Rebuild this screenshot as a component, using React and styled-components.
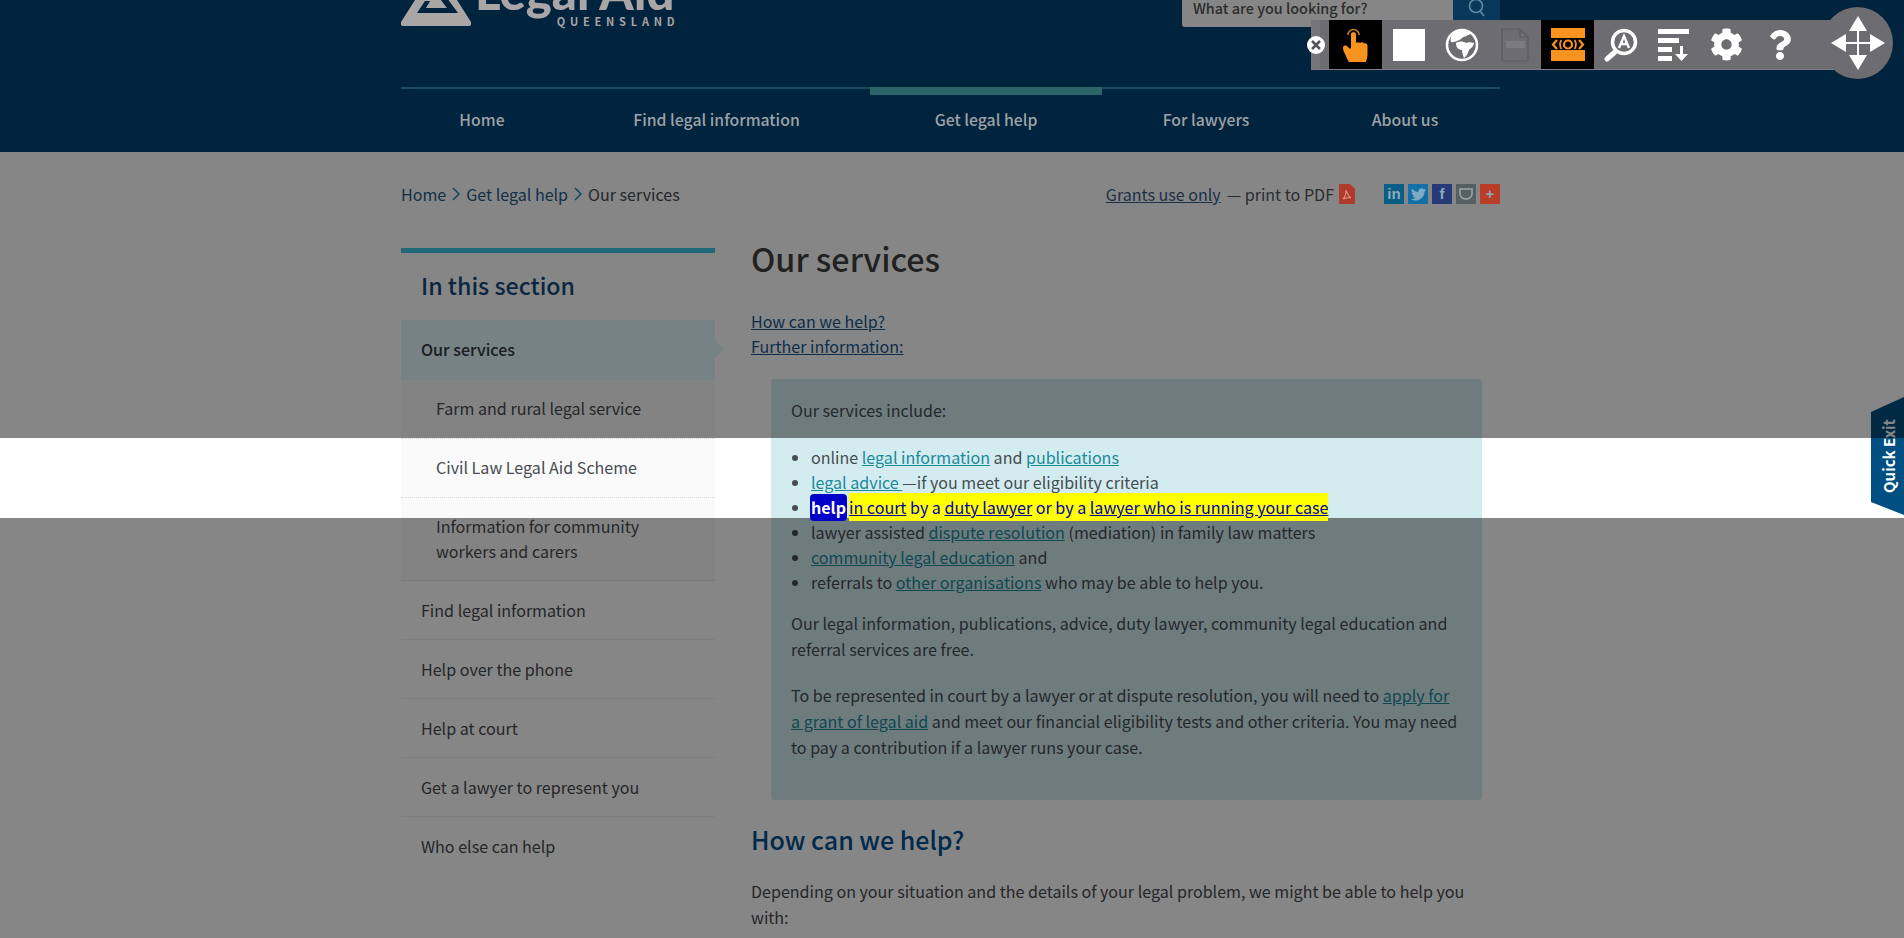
import React from 'react';
import styled, { createGlobalStyle } from 'styled-components';
import { FaCog, FaQuestion } from 'react-icons/fa';

const SANS = '"Noto Sans CJK SC", "Source Sans Pro", "Open Sans", sans-serif';
const BODY = '16.07px';

const Global = createGlobalStyle`
  html, body { margin: 0; padding: 0; background: #fff; }
  body { font-family: ${SANS}; color: #474b4f; overflow: hidden; }
  * { box-sizing: border-box; }
`;

const Page = styled.div`position: relative; width: 1904px; height: 938px; overflow: hidden; background: #fff;`;
const Header = styled.header`height: 152px; background: #00233e;`;
const Wrap = styled.div`width: 1099px; margin-left: 401px;`;
const HeaderTop = styled.div`display: flex; justify-content: space-between; height: 87px; overflow: hidden;`;
const Logo = styled.div`display: flex; gap: 4px; height: 27px;`;
const LogoWords = styled.div`display: flex; flex-direction: column; align-items: flex-end; margin-top: -34px;`;
const LogoName = styled.div`font-family: "Lato", sans-serif; font-weight: 900; font-size: 49px; line-height: 50px; color: #aaa6a6; white-space: nowrap;`;
const LogoState = styled.div`font-weight: 700; font-size: 11px; line-height: 11px; letter-spacing: 4.8px; margin-right: -5px; color: #a5a5a5; white-space: nowrap;`;
const Search = styled.div`display: flex; height: 27px;`;
const SearchInput = styled.div`width: 271px; height: 27px; background: #868686; border-radius: 0 0 3px 3px; padding-left: 11px; font-size: 14.4px; line-height: 15px; font-weight: 500; color: #2c2c2c;`;
const SearchButton = styled.div`width: 47px; height: 23px; background: #08395c; display: flex; justify-content: center; color: #5f89a5;`;
const Nav = styled.nav`display: flex; height: 65px; border-top: 2px solid #1c4a5f;`;
const NavItem = styled.a`
  width: ${p => p.$w}px; height: 65px; margin-top: -2px; padding-top: ${p => (p.$active ? 12 : 20)}px;
  border-top: ${p => (p.$active ? '8px solid #2c6468' : '0')};
  text-align: center; font-size: 15.8px; line-height: 26px; font-weight: 500; color: #9ea2a6;
`;

const Crumbs = styled.div`display: flex; justify-content: space-between; height: 96px; padding-top: 30px; font-size: ${BODY}; line-height: 26px;`;
const CrumbTrail = styled.div`display: flex; align-items: center; height: 24px; gap: 5px;`;
const CrumbLink = styled.a`color: #1f5c8a;`;
const CrumbChevron = styled.svg`width: 10px; height: 16px; fill: none; stroke: #2a8ab0; stroke-width: 1.6;`;
const Tools = styled.div`position: relative; z-index: 3; display: flex; align-items: center; height: 24px; color: #2a2d30;`;
const ToolsLink = styled.a`color: #1c3148; text-decoration: underline; margin-right: 6px;`;
const PdfIcon = styled.svg`width: 16px; height: 20px; margin-left: 5px; margin-right: 29px;`;
const Socials = styled.div`display: flex; gap: 4px;`;
const Social = styled.div`
  width: 20px; height: 20px; background: ${p => p.$bg}; color: #8fa9b8;
  display: flex; align-items: center; justify-content: center;
  font-family: "Liberation Sans", sans-serif; font-weight: 700; font-size: 15px; line-height: 20px;
`;

const Columns = styled.div`display: grid; grid-template-columns: 314px 1fr; column-gap: 36px;`;
const Side = styled.aside`border-top: 5px solid #40c8e4; position: relative;`;
const SideTitle = styled.h2`margin: 0; height: 67px; padding: 18px 0 0 20px; font-size: 23.2px; line-height: 28px; font-weight: 500; color: #144a78;`;
const SideActive = styled.a`
  position: relative; display: block; height: 60px; padding-left: 20px;
  font-size: ${BODY}; line-height: 58px; font-weight: 500; color: #33383b; background: #e0f8fc;
  &::after {
    content: ""; position: absolute; left: 100%; top: 20px;
    border-left: 9px solid #e0f8fc; border-top: 9px solid transparent; border-bottom: 9px solid transparent;
  }
`;
const SubItem = styled.a`
  display: block; padding: 16px 20px ${p => (p.$tall ? 16 : 17)}px 35px; font-size: ${BODY}; line-height: 25px;
  background: #fafafa; border-bottom: 1px dotted #d8d8d8; color: #474b4f;
`;
const TopItem = styled.a`
  display: block; height: 59px; padding: 17px 0 0 20px; font-size: ${BODY}; line-height: 25px;
  border-bottom: 1px solid #efefef; color: #474b4f;
  &:last-child { border-bottom: 0; }
`;

const Main = styled.main`min-width: 0; font-size: ${BODY}; line-height: 26px;`;
const Title = styled.h1`margin: -2px 0 39px; font-size: 32.3px; line-height: 24px; font-weight: 500; color: #3f3f3f;`;
const JumpLinks = styled.div`display: flex; flex-direction: column; align-items: flex-start; line-height: 25px;`;
const JumpLink = styled.a`color: #18598f; text-decoration: underline;`;
const Panel = styled.section`margin: 20px 18px 0 20px; padding: 18px 22px 20px 20px; background: #d3ecf0; border-radius: 3px;`;
const PanelText = styled.p`margin: 0 0 20px; color: #474d50;`;
const List = styled.ul`margin: 22px 0 15px; padding: 0 0 0 20px; line-height: 25px; color: #474d50;`;
const TealLink = styled.a`color: #1b8a9b; text-decoration: underline;`;
const Mark = styled.span`position: relative; z-index: 3; background: #ffff00; color: #0000a8; padding: 2px 0;`;
const MarkLink = styled.span`text-decoration: underline;`;
const HelpWord = styled.span`position: relative; z-index: 3; display: inline-block; height: 27px; margin: -1px 2px -1px -1px; padding: 0 1px; background: #0000c8; color: #fff; border-radius: 4px; font-weight: 700; line-height: 26px;`;
const Subhead = styled.h2`margin: 21px 0 21px; font-size: 25px; line-height: 36px; font-weight: 500; color: #00508f;`;
const BodyText = styled.p`margin: 0; color: #474b4f;`;

const Mask = styled.div`position: absolute; left: 0; right: 0; z-index: 2; top: ${p => p.$top}px; height: ${p => p.$h}px; background: rgba(0, 0, 0, 0.475);`;

const QuickExit = styled.a`
  position: absolute; z-index: 1; left: 1871px; top: 397px; width: 33px; height: 118px;
  background: #004f82; clip-path: polygon(0 15px, 100% 0, 100% 100%, 0 105px);
  display: flex; align-items: center; justify-content: center;
`;
const QuickExitLabel = styled.span`
  display: block; transform: rotate(-90deg); white-space: nowrap;
  font-size: 15px; line-height: 20px; font-weight: 700; color: #fff; margin-left: 3px;
`;

const Toolbar = styled.div`
  position: absolute; z-index: 4; left: 1311px; top: 20px; width: 530px; height: 50px; padding-left: 9px;
  display: grid; grid-template-columns: repeat(9, 53px); align-items: stretch;
  background: #6c6c71; border-bottom: 1px solid #7c8088; border-left: 9px solid #76767a;
`;
const Slot = styled.div`
  display: flex; align-items: center; justify-content: center; height: 49px;
  background: ${p => (p.$on ? '#000' : 'transparent')};
  color: #fff;
`;
const WhiteSquare = styled.div`width: 32px; height: 32px; background: #fff;`;
const CloseButton = styled.div`
  position: absolute; z-index: 5; left: 1307px; top: 36px; width: 18px; height: 18px; border-radius: 50%;
  background: #fff; display: flex; align-items: center; justify-content: center;
`;
const MoveHandle = styled.div`
  position: absolute; z-index: 5; left: 1822px; top: 7px; width: 71px; height: 72px; border-radius: 50%;
  background: #6c6c71; display: flex; align-items: center; justify-content: center;
`;

const Chevron = () => (
  <CrumbChevron viewBox="0 0 10 16"><path d="M2 2 l6 6 -6 6" /></CrumbChevron>
);

const HandIcon = () => (
  <svg width="26" height="38" viewBox="0 0 26 38">
    <path d="M5 9a5.500 5.500 0 0 1 11 0" fill="none" stroke="#c9771a" strokeWidth="1.500" />
    <path fill="#f7931e" d="M8 8c0-2.500 5-2.500 5 0v9c1-1 3-1 4 0 1-1 3-1 4 .5 1-.5 3.500 0 3.500 2v9c0 3-1 5-1.500 7.500H6C4 33 3 30 1.500 27 0 24 0 23 0 21.500 .5 19 3 19 4.500 20.500L6 22c1 1 2 .5 2-.5z" />
  </svg>
);

const GlobeIcon = () => (
  <svg width="34" height="34" viewBox="0 0 34 34">
    <circle cx="17" cy="17" r="15" fill="none" stroke="#fff" strokeWidth="2.600" />
    <path fill="#fff" d="M10 4c4-2 10-2 15 0 2 1.500-1 3-2 3-2 2-4 1-6 3-2 2-8 5-11 4-1-3 0-7 4-10z" />
    <path fill="#fff" d="M11 15c3-2 7-2 10 0 2-1 5-1 8 0 0 3-3 5-5 7-1 3-2 6-5 8-1-2-2-6-2-8-3 0-6-2-6-7z" />
  </svg>
);

const DocIcon = () => (
  <svg width="30" height="34" viewBox="0 0 30 34" fill="none" stroke="#606064" strokeWidth="1.600">
    <path d="M2 1h18l8 8v23a1 1 0 0 1-1 1H3a1 1 0 0 1-1-1z" />
    <path d="M20 1v8h8" />
    <path d="M6 13h19v7H6z" fill="#7c7c80" stroke="none" />
  </svg>
);

const EyeIcon = () => (
  <svg width="34" height="33" viewBox="0 0 34 33">
    <rect x="0" y="0" width="34" height="10" fill="#f7931e" />
    <rect x="0" y="22" width="34" height="11" fill="#f7931e" />
    <path d="M6 12l-4 4.500 4 4.500M28 12l4 4.500-4 4.500" fill="none" stroke="#f7931e" strokeWidth="2.200" />
    <path d="M10.500 12c-2 3-2 6 0 9M23.500 12c2 3 2 6 0 9" fill="none" stroke="#f7931e" strokeWidth="1.800" />
    <circle cx="17" cy="16.500" r="4" fill="none" stroke="#f7931e" strokeWidth="2.200" />
  </svg>
);

const ZoomIcon = () => (
  <svg width="34" height="34" viewBox="0 0 34 34">
    <circle cx="20" cy="14" r="11.500" fill="none" stroke="#fff" strokeWidth="3.500" />
    <path d="M11 24L3 31" stroke="#fff" strokeWidth="5" strokeLinecap="round" />
    <path d="M15 20l5-12 5 12M17 16h6" fill="none" stroke="#fff" strokeWidth="2.400" />
  </svg>
);

const SortIcon = () => (
  <svg width="32" height="32" viewBox="0 0 32 32" fill="#fff">
    <rect x="0" y="0" width="31" height="5" />
    <rect x="0" y="9" width="21" height="5" />
    <rect x="0" y="18" width="14" height="5" />
    <rect x="0" y="27" width="14" height="5" />
    <path d="M22 17h3v8h5l-6.500 7-6.500-7h5z" />
  </svg>
);

const MoveIcon = () => (
  <svg width="54" height="54" viewBox="0 0 54 54" fill="#fff">
    <path d="M26 8h2v38h-2z" />
    <path d="M8 26h38v2H8z" />
    <path d="M27 0l9 15H18z" />
    <path d="M27 54l-9-15h18z" />
    <path d="M0 27l15-9v18z" />
    <path d="M54 27l-15 9V18z" />
  </svg>
);

const SearchIcon = () => (
  <svg width="18" height="20" viewBox="0 0 18 20" fill="none" stroke="currentColor" strokeWidth="1.600">
    <circle cx="8" cy="6" r="6.500" />
    <path d="M12 11l4 5" />
  </svg>
);

const LogoMark = () => (
  <svg width="70" height="27" viewBox="0 0 70 27">
    <path fill="#aaa6a6" d="M14 0h42l14 22c1 2 0 4-2 4H2c-2 0-3-2-2-4z" />
    <path fill="#00233e" d="M26 -2h20l11 15H16l8-12 5 0-4 7h21L38 -2z" />
    <path fill="#aaa6a6" d="M32 0h8l4 6H30z" />
  </svg>
);

const navItems = [
  ['Home', 162],
  ['Find legal information', 307],
  ['Get legal help', 232, true],
  ['For lawyers', 208],
  ['About us', 190],
];

const subItems = ['Farm and rural legal service', 'Civil Law Legal Aid Scheme'];
const topItems = ['Find legal information', 'Help over the phone', 'Help at court', 'Get a lawyer to represent you', 'Who else can help'];

export default function App() {
  return (
    <Page>
      <Global />
      <Header>
        <Wrap>
          <HeaderTop>
            <Logo>
              <LogoMark />
              <LogoWords>
                <LogoName>Legal Aid</LogoName>
                <LogoState>QUEENSLAND</LogoState>
              </LogoWords>
            </Logo>
            <Search>
              <SearchInput>What are you looking for?</SearchInput>
              <SearchButton><SearchIcon /></SearchButton>
            </Search>
          </HeaderTop>
          <Nav>
            {navItems.map(([label, w, active]) => (
              <NavItem key={label} $w={w} $active={active}>{label}</NavItem>
            ))}
          </Nav>
        </Wrap>
      </Header>

      <Wrap>
        <Crumbs>
          <CrumbTrail>
            <CrumbLink>Home</CrumbLink><Chevron />
            <CrumbLink>Get legal help</CrumbLink><Chevron />
            <span>Our services</span>
          </CrumbTrail>
          <Tools>
            <ToolsLink>Grants use only</ToolsLink>
            <span>— print to PDF</span>
            <PdfIcon viewBox="0 0 16 20">
              <path fill="#b03a2a" d="M1 0h10l5 5v14a1 1 0 0 1-1 1H1a1 1 0 0 1-1-1V1a1 1 0 0 1 1-1z" />
              <path fill="none" stroke="#d9897b" strokeWidth="1.200" d="M4 15c2-2 3-6 3-9 1 3 2 6 5 8-3-1-5 0-8 1z" />
            </PdfIcon>
            <Socials>
              <Social $bg="#0a5d85">in</Social>
              <Social $bg="#1270a8">
                <svg width="15" height="13" viewBox="0 0 24 20" fill="#7fa9c4"><path d="M24 2.400a10 10 0 0 1-2.800.8A5 5 0 0 0 23.300.5a10 10 0 0 1-3.100 1.200 4.900 4.900 0 0 0-8.400 4.500A14 14 0 0 1 1.700.9a4.900 4.900 0 0 0 1.500 6.600 5 5 0 0 1-2.200-.6c0 2.400 1.700 4.400 3.900 4.900a5 5 0 0 1-2.200.1 4.900 4.900 0 0 0 4.600 3.400A10 10 0 0 1 0 17.300 14 14 0 0 0 21.600 5.100 10 10 0 0 0 24 2.400z" /></svg>
              </Social>
              <Social $bg="#263a78">f</Social>
              <Social $bg="#566064">
                <svg width="14" height="12" viewBox="0 0 14 12" fill="none" stroke="#9aa7a9" strokeWidth="1.500"><path d="M1 1h12v5c0 3-3 5-6 5S1 9 1 6z" /></svg>
              </Social>
              <Social $bg="#b83c28">+</Social>
            </Socials>
          </Tools>
        </Crumbs>

        <Columns>
          <Side>
            <SideTitle>In this section</SideTitle>
            <SideActive>Our services</SideActive>
            {subItems.map(s => <SubItem key={s}>{s}</SubItem>)}
            <SubItem $tall>Information for community<br />workers and carers</SubItem>
            {topItems.map(s => <TopItem key={s}>{s}</TopItem>)}
          </Side>

          <Main>
            <Title>Our services</Title>
            <JumpLinks>
              <JumpLink>How can we help?</JumpLink>
              <JumpLink>Further information:</JumpLink>
            </JumpLinks>
            <Panel>
              <PanelText>Our services include:</PanelText>
              <List>
                <li>online <TealLink>legal information</TealLink> and <TealLink>publications</TealLink></li>
                <li><TealLink>legal advice </TealLink>—if you meet our eligibility criteria</li>
                <li>
                  <HelpWord>help</HelpWord>
                  <Mark><MarkLink>in court</MarkLink> by a <MarkLink>duty lawyer</MarkLink> or by a <MarkLink>lawyer who is running your case</MarkLink></Mark>
                </li>
                <li>lawyer assisted <TealLink>dispute resolution</TealLink> (mediation) in family law matters</li>
                <li><TealLink>community legal education</TealLink> and</li>
                <li>referrals to <TealLink>other organisations</TealLink> who may be able to help you.</li>
              </List>
              <PanelText>Our legal information, publications, advice, duty lawyer, community legal education and referral services are free.</PanelText>
              <PanelText>To be represented in court by a lawyer or at dispute resolution, you will need to <TealLink>apply for a grant of legal aid</TealLink> and meet our financial eligibility tests and other criteria. You may need to pay a contribution if a lawyer runs your case.</PanelText>
            </Panel>
            <Subhead>How can we help?</Subhead>
            <BodyText>Depending on your situation and the details of your legal problem, we might be able to help you with:</BodyText>
          </Main>
        </Columns>
      </Wrap>

      <QuickExit><QuickExitLabel>Quick Exit</QuickExitLabel></QuickExit>
      <Mask $top={152} $h={286} />
      <Mask $top={518} $h={420} />

      <Toolbar>
        <Slot $on><HandIcon /></Slot>
        <Slot><WhiteSquare /></Slot>
        <Slot><GlobeIcon /></Slot>
        <Slot><DocIcon /></Slot>
        <Slot $on><EyeIcon /></Slot>
        <Slot><ZoomIcon /></Slot>
        <Slot><SortIcon /></Slot>
        <Slot><FaCog size={33} /></Slot>
        <Slot><FaQuestion size={30} /></Slot>
      </Toolbar>
      <CloseButton>
        <svg width="10" height="10" viewBox="0 0 10 10" stroke="#55555a" strokeWidth="2.600"><path d="M1 1l8 8M9 1l-8 8" /></svg>
      </CloseButton>
      <MoveHandle><MoveIcon /></MoveHandle>
    </Page>
  );
}
